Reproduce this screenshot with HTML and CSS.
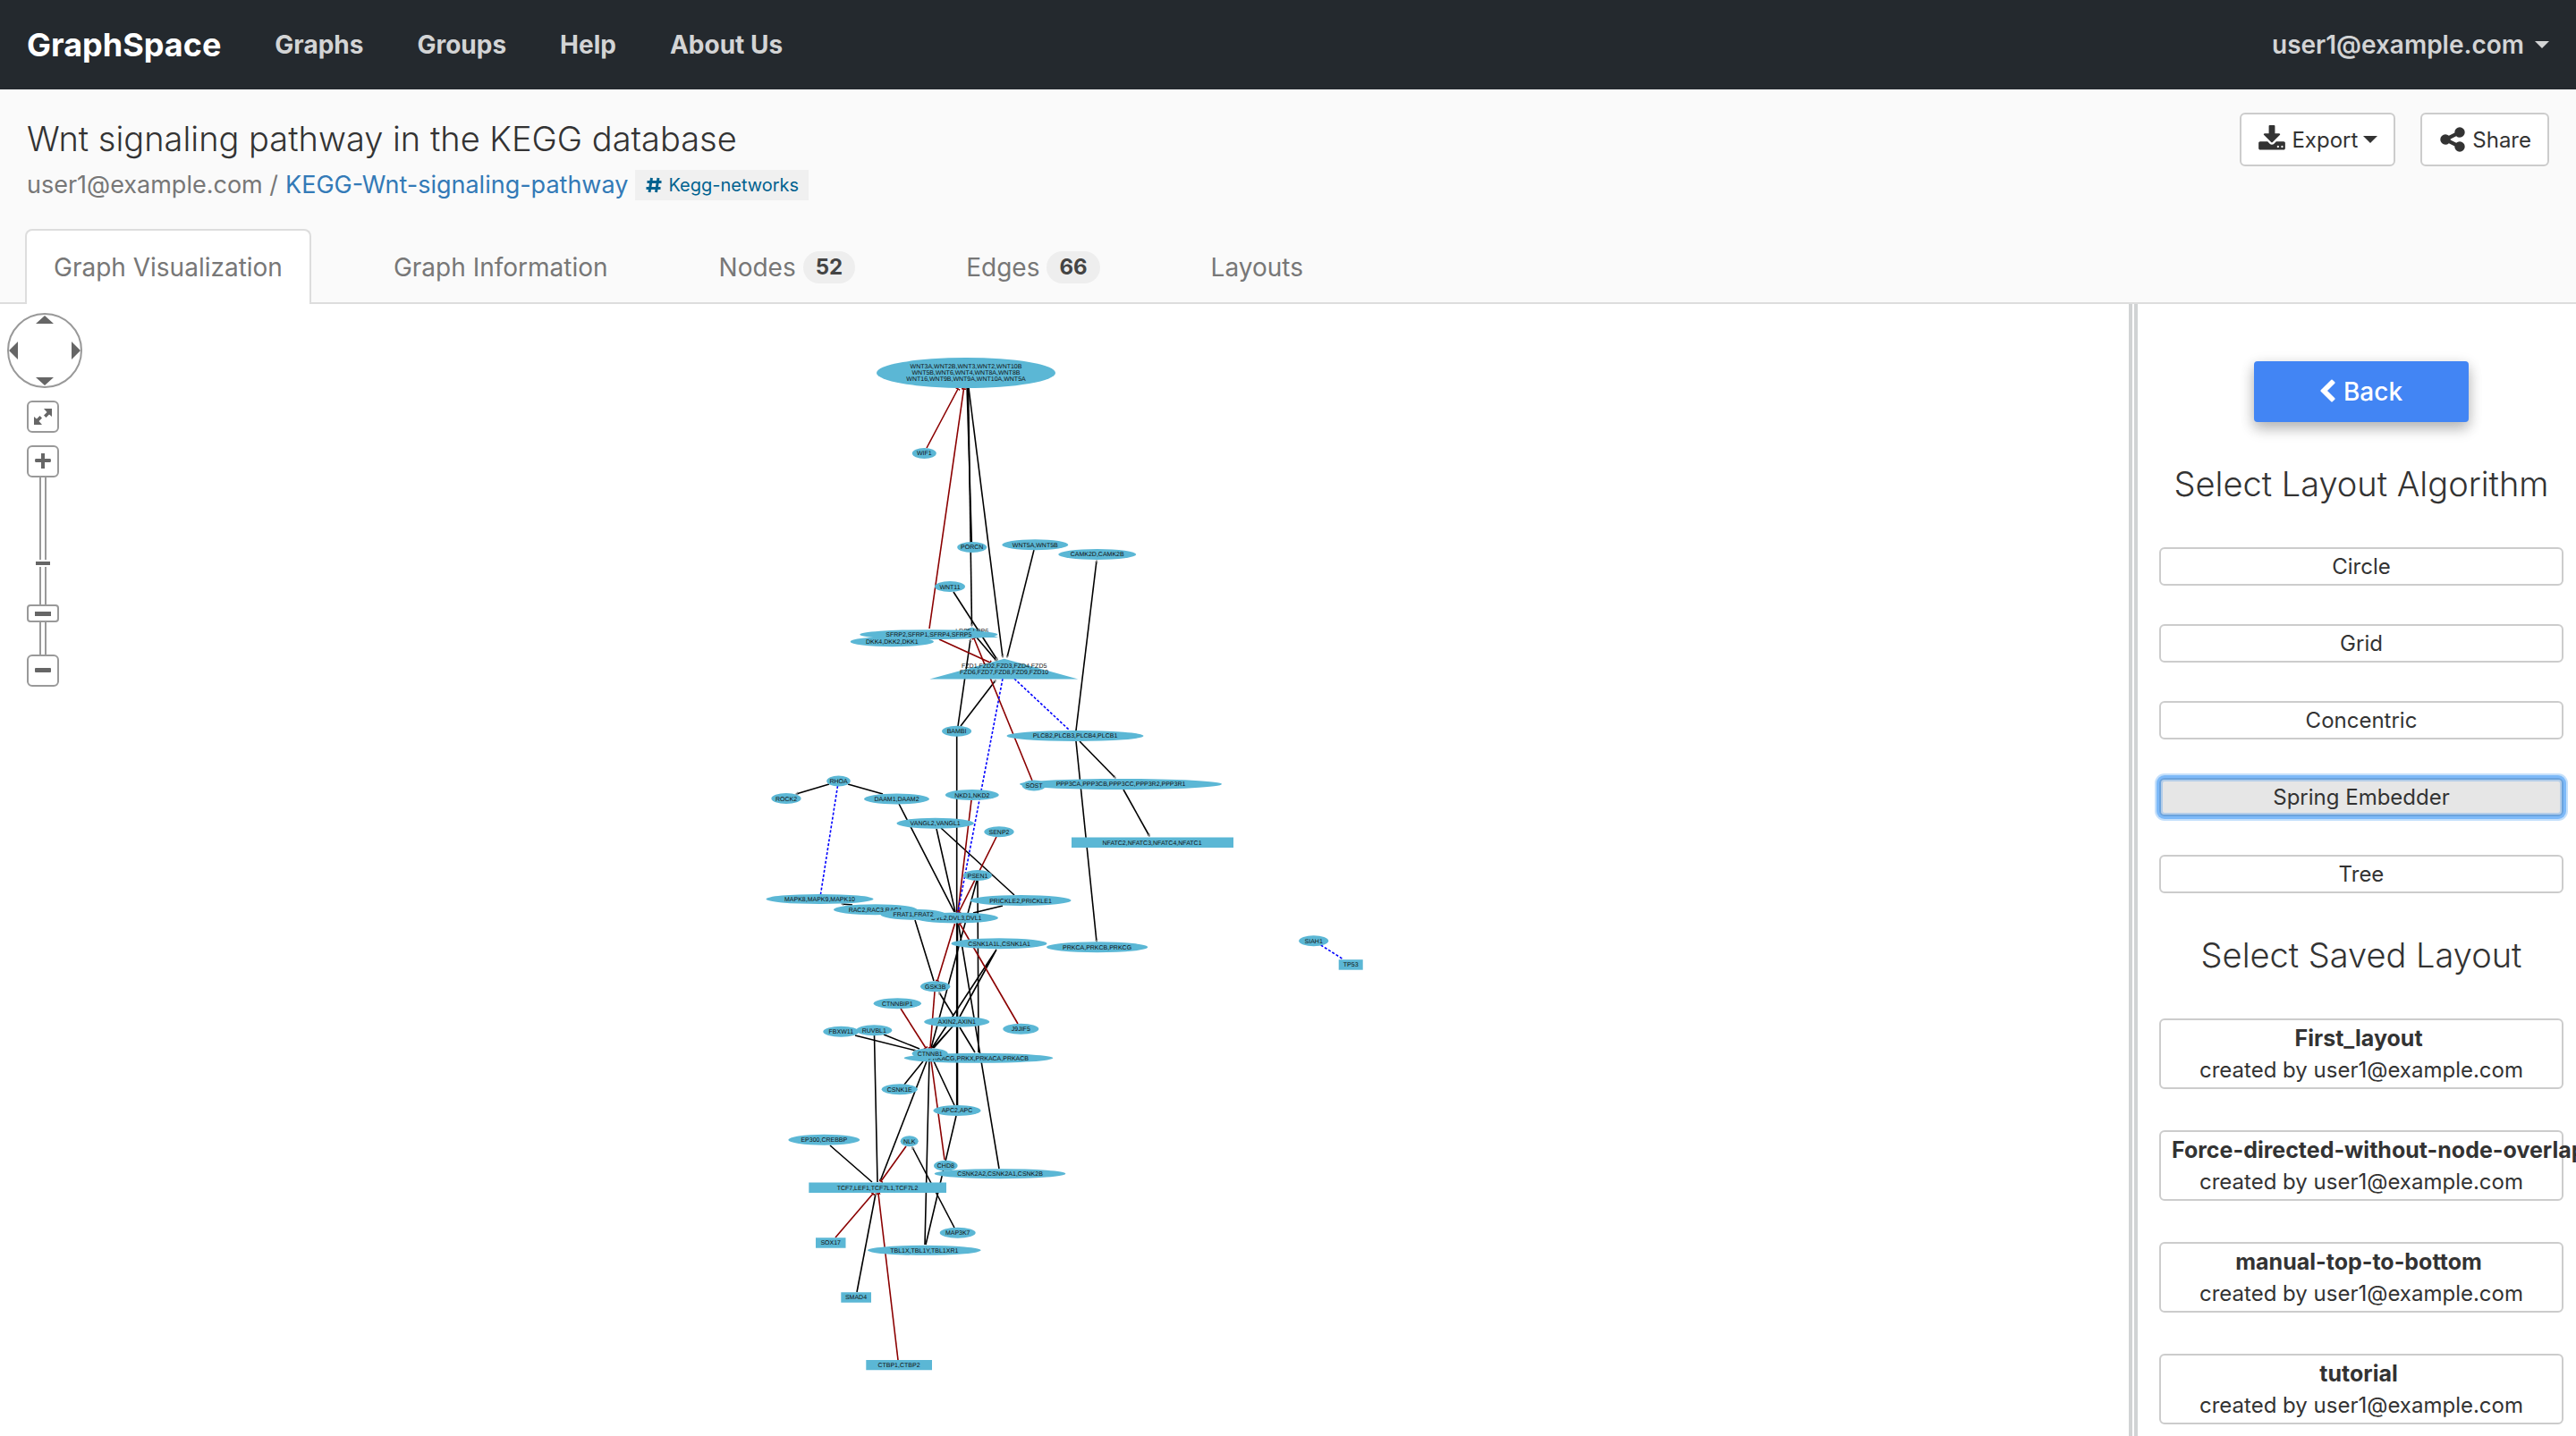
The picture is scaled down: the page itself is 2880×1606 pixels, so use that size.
FILE: index.html
```html
<!DOCTYPE html>
<html lang="en">
<head>
<meta charset="utf-8">
<title>GraphSpace</title>
<link rel="stylesheet" href="styles.css">
</head>
<body>
<nav class="navbar">
  <a class="brand" href="#">GraphSpace</a>
  <a class="nav-link" href="#">Graphs</a>
  <a class="nav-link" href="#">Groups</a>
  <a class="nav-link" href="#">Help</a>
  <a class="nav-link" href="#">About Us</a>
  <button class="user-menu" type="button">user1@example.com<span class="caret"></span></button>
</nav>

<header class="page-head">
  <div class="head-row">
    <div class="head-text">
      <h1 class="title">Wnt signaling pathway in the KEGG database</h1>
      <p class="crumbs">
        <span>user1@example.com /</span>
        <a class="graph-link" href="#">KEGG-Wnt-signaling-pathway</a>
        <a class="tag" href="#"><svg class="hash" viewBox="0 0 20 20"><path d="M7.5 2 5 18M15 2l-2.500 16M2.500 6.500h16M1.500 13.500h16"/></svg>Kegg-networks</a>
      </p>
    </div>
    <div class="actions">
      <button class="btn action" type="button">
        <svg class="icon" viewBox="0 0 1792 1792"><path d="M1344 1344q0-26-19-45t-45-19-45 19-19 45 19 45 45 19 45-19 19-45zm256 0q0-26-19-45t-45-19-45 19-19 45 19 45 45 19 45-19 19-45zm128-224v320q0 40-28 68t-68 28h-1472q-40 0-68-28t-28-68v-320q0-40 28-68t68-28h465l135 136q58 56 136 56t136-56l136-136h464q40 0 68 28t28 68zm-325-569q17 41-14 70l-448 448q-18 19-45 19t-45-19l-448-448q-31-29-14-70 17-39 59-39h256v-448q0-26 19-45t45-19h256q26 0 45 19t19 45v448h256q42 0 59 39z"/></svg>
        Export<span class="caret"></span>
      </button>
      <button class="btn action" type="button">
        <svg class="icon" viewBox="0 0 1792 1792"><path d="M1344 1024q133 0 226.500 93.500t93.500 226.500-93.500 226.500-226.500 93.500-226.500-93.500-93.500-226.500q0-12 2-34l-360-180q-92 86-218 86-133 0-226.500-93.500t-93.500-226.500 93.500-226.500 226.500-93.500q126 0 218 86l360-180q-2-22-2-34 0-133 93.500-226.500t226.500-93.500 226.500 93.500 93.500 226.500-93.500 226.500-226.500 93.500q-126 0-218-86l-360 180q2 22 2 34t-2 34l360 180q92-86 218-86z"/></svg>
        Share
      </button>
    </div>
  </div>
  <div class="tabs">
    <a class="tab active" href="#">Graph Visualization</a>
    <a class="tab" href="#">Graph Information</a>
    <a class="tab" href="#">Nodes<span class="badge">52</span></a>
    <a class="tab" href="#">Edges<span class="badge">66</span></a>
    <a class="tab" href="#">Layouts</a>
  </div>
</header>

<main class="workspace">
  <section class="canvas">
    <svg class="graph" viewBox="0 340 2380 1266" preserveAspectRatio="xMidYMin meet">
      <defs>
        <marker id="arrow" viewBox="0 0 6 6" refX="4" refY="3" markerWidth="4" markerHeight="4" markerUnits="userSpaceOnUse" orient="auto"><path d="M0 0 6 3 0 6 1.500 3z" fill="#888"/></marker>
        <marker id="tee" viewBox="0 0 2 6" refX="1" refY="3" markerWidth="2" markerHeight="5" markerUnits="userSpaceOnUse" orient="auto"><path d="M0 0h2v6H0z" fill="#8b0000"/></marker>
      </defs>
      <g class="edge">
        <path d="M1081 430 1086.500 612"/>
        <path d="M1069.700 823V1238M1070.500 1030V1238"/>
        <path d="M948 877 987 888M1005 899 1067 1020M1047 927 1068 1020M1052 926 1134 1001M1121 1013 1088 1021"/>
        <path d="M1092 985 1041 1172M1093 985 1094 1177M1071.500 1033 1117 1307M1023 1029 1044 1097"/>
        <path d="M1114 1062 1042 1172M1114 1062 1073 1137M1066 1147 1043 1172M1065 1148 1044 1172M1073 1149 1090 1177"/>
        <path d="M988 1157 1028 1173M977.500 1158 981 1322M1032 1187 1011 1213M1039 1184 1034 1392M1044 1187 1067 1236"/>
        <path d="M1069 1248 1035 1392M928 1281 975 1322"/>
      </g>
      <g class="edge arrow">
        <path d="M1082.500 430 1086.500 700"/><path d="M1083 434 1121 735"/><path d="M1156 615 1126 735"/>
        <path d="M1066 662 1115 738"/><path d="M1092 713 1114 739"/><path d="M1071 812 1085 715"/><path d="M1074 812 1113 761"/>
        <path d="M1203 817 1226 627"/><path d="M1207 829 1247 870"/><path d="M1256 883 1285 935"/><path d="M1203 829 1226 1053"/>
        <path d="M927 877 890 888"/><path d="M953 1012 941 1011"/><path d="M1066 1136 1050 1110"/><path d="M956 1158 1024 1175"/>
        <path d="M1036 1187 984 1321"/><path d="M1067 1373 1020 1283"/><path d="M958 1445 979 1335"/>
      </g>
      <g class="edge tee">
        <path d="M1036 501 1071 435"/><path d="M1039 703 1077.500 435"/><path d="M1050 715 1107 741"/><path d="M1154 873 1089 714"/>
        <path d="M1086 895 1071 1020"/><path d="M1114 936 1072 1020"/><path d="M1067.500 1033 1048 1097"/><path d="M1138 1145 1073 1033"/>
        <path d="M1045 1109 1040 1172"/><path d="M1007 1128 1035 1172"/><path d="M1056 1297 1041 1186"/><path d="M1013 1282 985 1321"/>
        <path d="M934 1384 976 1335"/><path d="M1004 1521 982 1335"/>
      </g>
      <path class="edge dashed" d="M1134 759 1196 817M1121 759 1071 1020M936.500 879 917.500 1000M1476.700 1057 1502 1073"/>

      <g class="node">
        <ellipse cx="1080" cy="417" rx="100" ry="17"/>
        <text x="1080" y="412">WNT3A,WNT2B,WNT3,WNT2,WNT10B</text>
        <text x="1080" y="419">WNT5B,WNT6,WNT4,WNT8A,WNT8B</text>
        <text x="1080" y="426">WNT16,WNT9B,WNT9A,WNT10A,WNT5A</text>
        <ellipse cx="1033.300" cy="507" rx="13.500" ry="6"/><text x="1033.300" y="509">WIF1</text>
        <ellipse cx="1086.700" cy="612" rx="16.500" ry="6"/><text x="1086.700" y="614">PORCN</text>
        <ellipse cx="1157.300" cy="609.300" rx="37" ry="6"/><text x="1157.300" y="611.500">WNT5A,WNT5B</text>
        <ellipse cx="1226.700" cy="620" rx="43.500" ry="6"/><text x="1226.700" y="622">CAMK2D,CAMK2B</text>
        <ellipse cx="1062" cy="656" rx="17" ry="6"/><text x="1062" y="658.500">WNT11</text>
        <ellipse cx="997.300" cy="717.700" rx="46.700" ry="5.500"/><text x="997.300" y="720">DKK4,DKK2,DKK1</text>
        <path d="M1086.700 701.500 1116 713H1057z"/><text x="1086.700" y="708">LRP5,LRP6</text>
        <ellipse cx="1038.300" cy="709.700" rx="77" ry="5.500"/><text x="1038.300" y="712">SFRP2,SFRP1,SFRP4,SFRP5</text>
        <path d="M1122.700 736.700 1205.300 759.500H1039.300z"/>
        <text x="1122.700" y="747">FZD1,FZD2,FZD3,FZD4,FZD5</text>
        <text x="1122.700" y="754">FZD6,FZD7,FZD8,FZD9,FZD10</text>
        <ellipse cx="1069.600" cy="817.700" rx="16.500" ry="6"/><text x="1069.600" y="820">BAMBI</text>
        <ellipse cx="1202" cy="823" rx="76.500" ry="6"/><text x="1202" y="825">PLCB2,PLCB3,PLCB4,PLCB1</text>
        <ellipse cx="1253" cy="877" rx="113" ry="6"/><text x="1253" y="879">PPP3CA,PPP3CB,PPP3CC,PPP3R2,PPP3R1</text>
        <ellipse cx="1156" cy="878.500" rx="13.300" ry="6"/><text x="1156" y="881">SOST</text>
        <path d="M1198 936.500h181v11.500h-181z"/><text x="1288" y="945">NFATC2,NFATC3,NFATC4,NFATC1</text>
        <ellipse cx="1086.800" cy="889" rx="30" ry="6"/><text x="1086.800" y="891.500">NKD1,NKD2</text>
        <ellipse cx="937.500" cy="873.500" rx="13.300" ry="6"/><text x="937.500" y="876">RHOA</text>
        <ellipse cx="879" cy="893" rx="16.600" ry="6"/><text x="879" y="895.500">ROCK2</text>
        <ellipse cx="1002.500" cy="893.500" rx="36.500" ry="6"/><text x="1002.500" y="896">DAAM1,DAAM2</text>
        <ellipse cx="1045.700" cy="920.700" rx="43.300" ry="6"/><text x="1045.700" y="923">VANGL2,VANGL1</text>
        <ellipse cx="1117" cy="930.300" rx="16.600" ry="6"/><text x="1117" y="932.700">SENP2</text>
        <ellipse cx="1093" cy="979" rx="16" ry="6"/><text x="1093" y="981.500">PSEN1</text>
        <ellipse cx="1141" cy="1007" rx="56.500" ry="6"/><text x="1141" y="1009.500">PRICKLE2,PRICKLE1</text>
        <ellipse cx="916.500" cy="1005.500" rx="60" ry="5.500"/><text x="916.500" y="1008">MAPK8,MAPK9,MAPK10</text>
        <ellipse cx="978.600" cy="1017.300" rx="46.700" ry="6"/><text x="978.600" y="1019.500">RAC2,RAC3,RAC1</text>
        <ellipse cx="1069.300" cy="1026.500" rx="46.700" ry="6"/><text x="1069.300" y="1029">DVL2,DVL3,DVL1</text>
        <ellipse cx="1021" cy="1022.700" rx="36.600" ry="6"/><text x="1021" y="1025">FRAT1,FRAT2</text>
        <ellipse cx="1117" cy="1055.300" rx="53.500" ry="6"/><text x="1117" y="1057.700">CSNK1A1L,CSNK1A1</text>
        <ellipse cx="1226.600" cy="1059.300" rx="56.600" ry="6"/><text x="1226.600" y="1061.700">PRKCA,PRKCB,PRKCG</text>
        <ellipse cx="1468.700" cy="1052.300" rx="16.500" ry="6"/><text x="1468.700" y="1054.500">SIAH1</text>
        <path d="M1496.700 1073.200h27v11.500h-27z"/><text x="1510.200" y="1081">TP53</text>
        <ellipse cx="1045.700" cy="1103.300" rx="16.600" ry="6"/><text x="1045.700" y="1105.500">GSK3B</text>
        <ellipse cx="1003.300" cy="1122.300" rx="26.600" ry="6"/><text x="1003.300" y="1124.500">CTNNBIP1</text>
        <ellipse cx="1069.700" cy="1142.700" rx="36.600" ry="6"/><text x="1069.700" y="1145">AXIN2,AXIN1</text>
        <ellipse cx="1141.300" cy="1150.700" rx="20" ry="6"/><text x="1141.300" y="1153">J9JIF5</text>
        <ellipse cx="940.300" cy="1153.700" rx="20" ry="6"/><text x="940.300" y="1156">FBXW11</text>
        <ellipse cx="977.300" cy="1152.300" rx="20" ry="6"/><text x="977.300" y="1154.700">RUVBL1</text>
        <ellipse cx="1094" cy="1183.300" rx="83.300" ry="5.500"/><text x="1094" y="1185.700">PRKACG,PRKX,PRKACA,PRKACB</text>
        <ellipse cx="1039.700" cy="1178.300" rx="20" ry="6"/><text x="1039.700" y="1180.700">CTNNB1</text>
        <ellipse cx="1005.700" cy="1218.300" rx="20" ry="6"/><text x="1005.700" y="1220.700">CSNK1E</text>
        <ellipse cx="1070" cy="1242" rx="26.600" ry="6"/><text x="1070" y="1244">APC2,APC</text>
        <ellipse cx="921.300" cy="1274.700" rx="40" ry="6"/><text x="921.300" y="1277">EP300,CREBBP</text>
        <ellipse cx="1016.700" cy="1276.300" rx="10" ry="6"/><text x="1016.700" y="1278.700">NLK</text>
        <ellipse cx="1118" cy="1312.700" rx="73.300" ry="5.500"/><text x="1118" y="1315">CSNK2A2,CSNK2A1,CSNK2B</text>
        <ellipse cx="1057.300" cy="1303.700" rx="13.300" ry="6"/><text x="1057.300" y="1306">CHD8</text>
        <path d="M904.300 1322.500h153.700v11.500h-153.700z"/><text x="981" y="1330.700">TCF7,LEF1,TCF7L1,TCF7L2</text>
        <ellipse cx="1070.700" cy="1378.700" rx="20" ry="6"/><text x="1070.700" y="1381">MAP3K7</text>
        <ellipse cx="1033.300" cy="1398.300" rx="63.300" ry="5.500"/><text x="1033.300" y="1400.700">TBL1X,TBL1Y,TBL1XR1</text>
        <path d="M912 1384.300h33.500v11.500h-33.500z"/><text x="928.700" y="1392.300">SOX17</text>
        <path d="M940.300 1445.300h33.700v11.500h-33.700z"/><text x="957" y="1453">SMAD4</text>
        <path d="M968.300 1521h73.700v11.300h-73.700z"/><text x="1005" y="1528.700">CTBP1,CTBP2</text>
      </g>
    </svg>

    <div class="panzoom">
      <svg class="pan" viewBox="0 0 84 84">
        <circle cx="42" cy="42" r="41"/>
        <path d="M42 3 52 12H32zM42 81 52 72H32zM2 42 12 32V52zM82 42 72 32V52z"/>
      </svg>
      <button class="pz-button fit" type="button" aria-label="Fit">
        <svg viewBox="0 0 32 32"><path d="M17 7h9v9l-3-2.500-3.500 3.500-2.500-2.500 3.500-3.500zM15 25H6v-9l3 2.500 3.500-3.500 2.500 2.500-3.500 3.500z"/></svg>
      </button>
      <button class="pz-button" type="button" aria-label="Zoom in">
        <svg viewBox="0 0 32 32"><path d="M8 13h6V7h4v6h6q1 0 1 2t-1 2h-6v7h-4v-7H8q-1 0-1-2t1-2z"/></svg>
      </button>
      <div class="zoom-track">
        <input class="zoom-range" type="range" min="0" max="100" value="20" aria-label="Zoom">
        <span class="zoom-tick"></span>
      </div>
      <button class="pz-button" type="button" aria-label="Zoom out">
        <svg viewBox="0 0 32 32"><rect x="7" y="13" width="18" height="5" rx="1"/></svg>
      </button>
    </div>
  </section>

  <div class="splitter"></div>

  <aside class="sidebar">
    <button class="back" type="button">
      <svg class="chevron" viewBox="410 0 1036 1792"><path d="M1427 301l-531 531 531 531q19 19 19 45t-19 45l-166 166q-19 19-45 19t-45-19l-742-742q-19-19-19-45t19-45l742-742q19-19 45-19t45 19l166 166q19 19 19 45t-19 45z"/></svg>
      Back
    </button>
    <h2 class="side-title">Select Layout Algorithm</h2>
    <div class="algorithms">
      <button class="btn" type="button">Circle</button>
      <button class="btn" type="button">Grid</button>
      <button class="btn" type="button">Concentric</button>
      <button class="btn selected" type="button">Spring Embedder</button>
      <button class="btn" type="button">Tree</button>
    </div>
    <h2 class="side-title">Select Saved Layout</h2>
    <div class="saved">
      <button class="btn layout" type="button"><strong>First_layout&nbsp;</strong><span>created by user1@example.com</span></button>
      <button class="btn layout" type="button"><strong>Force-directed-without-node-overlap&nbsp;</strong><span>created by user1@example.com</span></button>
      <button class="btn layout" type="button"><strong>manual-top-to-bottom&nbsp;</strong><span>created by user1@example.com</span></button>
      <button class="btn layout" type="button"><strong>tutorial&nbsp;</strong><span>created by user1@example.com</span></button>
    </div>
  </aside>
</main>
</body>
</html>
```
FILE: styles.css
```css
* { box-sizing: border-box; }
body {
  margin: 0;
  min-height: 100vh;
  display: flex;
  flex-direction: column;
  overflow: hidden;
  background: #fff;
  color: #333;
  font-family: Inter, "Liberation Sans", sans-serif;
  font-size: 24px;
}
a { color: inherit; text-decoration: none; }
button { font: inherit; color: inherit; }
h1, h2, p { margin: 0; font-weight: 300; }

/* Top navigation */
.navbar {
  display: flex;
  align-items: center;
  gap: 60px;
  height: 100px;
  padding: 0 30px;
  background: #24292e;
  color: #d3d4d5;
  font-size: 28px;
  font-weight: 700;
}
.brand { color: #fff; font-size: 36px; }
.user-menu {
  display: flex;
  align-items: center;
  gap: 12px;
  margin-left: auto;
  padding: 0;
  border: 0;
  background: none;
  font-weight: 600;
}
.caret {
  border: 8px solid transparent;
  border-top-color: currentColor;
  border-bottom: 0;
}

/* Graph heading and tabs */
.page-head { background: #fafafa; border-bottom: 2px solid #ddd; }
.head-row {
  display: flex;
  justify-content: space-between;
  padding: 26px 30px 0;
}
.title { font-size: 38px; line-height: 58px; }
.crumbs {
  display: flex;
  align-items: center;
  gap: 8px;
  line-height: 46px;
  font-size: 27px;
  font-weight: 400;
  color: #777;
}
.graph-link { color: #337ab7; }
.tag {
  display: flex;
  align-items: center;
  gap: 6px;
  padding: 0 11px;
  line-height: 34px;
  background: #f0f0f0;
  color: #00628f;
  font-size: 20px;
}
.hash { width: 20px; height: 20px; fill: none; stroke: currentColor; stroke-width: 3; }
.actions { display: flex; align-items: flex-start; gap: 28px; }
.btn {
  border: 2px solid #ccc;
  border-radius: 6px;
  background: #fff;
  font-weight: 400;
}
.action {
  display: flex;
  align-items: center;
  gap: 6px;
  height: 60px;
  padding: 0 18px;
}
.icon { width: 32px; height: 32px; fill: currentColor; }
.tabs { display: flex; gap: 60px; margin-bottom: -2px; padding: 26px 28px 0; }
.tab {
  display: flex;
  align-items: center;
  gap: 8px;
  height: 84px;
  padding: 0 30px;
  border: 2px solid transparent;
  border-bottom: 0;
  border-radius: 8px 8px 0 0;
  color: #777;
  font-size: 28px;
}
.tab.active { border-color: #ddd; background: #fff; }
.badge {
  padding: 0 14px;
  border-radius: 18px;
  background: #eee;
  color: #444;
  font-size: 24px;
  font-weight: 700;
  line-height: 36px;
}

/* Workspace */
.workspace { display: flex; flex: 1; }
.canvas { position: relative; flex: 1; }
.graph { position: absolute; inset: 0; width: 100%; height: 100%; }
.edge { fill: none; stroke: #000; stroke-width: 1.6; }
.arrow path { marker-end: url(#arrow); }
.tee { stroke: #8b0000; }
.tee path { marker-end: url(#tee); }
.dashed { stroke: #00f; stroke-dasharray: 3 2; }
.node { fill: #5bb7d5; }
.node text {
  fill: #111;
  font-family: "Liberation Sans", sans-serif;
  font-size: 7px;
  text-anchor: middle;
  text-rendering: geometricPrecision;
}

/* Pan and zoom controls over the canvas */
.panzoom {
  position: absolute;
  left: 8px;
  top: 10px;
  width: 84px;
}
.panzoom svg { display: block; fill: #666; }
.pan { width: 84px; height: 84px; }
.pan circle { fill: #fff; stroke: #999; stroke-width: 2; }
.pz-button {
  display: block;
  width: 36px;
  height: 36px;
  margin-left: 22px;
  padding: 0;
  border: 2px solid #999;
  border-radius: 6px;
  background: #fff;
}
.fit { margin-top: 14px; margin-bottom: 14px; }
.zoom-track { position: relative; width: 36px; height: 198px; margin-left: 22px; }
.zoom-range {
  appearance: none;
  writing-mode: vertical-lr;
  direction: rtl;
  display: block;
  width: 36px;
  height: 100%;
  margin: 0;
  background: linear-gradient(90deg, #999 2px, #fff 2px 6px, #999 6px) center / 8px 100% no-repeat;
}
.zoom-range::-webkit-slider-thumb {
  appearance: none;
  width: 36px;
  height: 20px;
  border: 2px solid #999;
  border-radius: 4px;
  background: linear-gradient(#666, #666) center / 18px 5px no-repeat #fff;
}
.zoom-tick {
  position: absolute;
  left: 10px;
  top: 92px;
  width: 16px;
  height: 8px;
  border: solid #fff;
  border-width: 2px 0;
  background: #666;
}

/* Layout sidebar */
.splitter {
  width: 10px;
  border: solid #d1d3d4;
  border-width: 0 4px;
}
.sidebar {
  width: 490px;
  padding: 64px 14px 12px 24px;
}
.back {
  display: flex;
  align-items: center;
  justify-content: center;
  gap: 9px;
  width: 240px;
  height: 68px;
  margin: 0 auto;
  border: 0;
  border-radius: 4px;
  background: #4285f4;
  box-shadow: 0 8px 16px rgba(0, 0, 0, .2), 0 4px 16px rgba(0, 0, 0, .15);
  color: #fff;
  font-size: 28px;
  font-weight: 500;
}
.chevron { width: 17px; height: 28px; fill: currentColor; }
.side-title {
  margin: 42px 0 44px;
  font-size: 38px;
  line-height: 54px;
  text-align: center;
  white-space: nowrap;
}
.algorithms { display: grid; gap: 43px; }
.algorithms .btn { height: 43px; padding: 0; }
.algorithms .selected {
  background: #e6e6e6;
  border-color: #6ba3dd;
  box-shadow: 0 0 0 3px #7db9f8, 0 0 0 5px #c5e0fb, inset 0 0 0 2px #b4cde8;
}
.saved { display: grid; grid-template-columns: minmax(0, 1fr); gap: 46px; }
.layout {
  display: grid;
  grid-template-columns: minmax(0, 1fr);
  align-content: center;
  height: 79px;
  padding: 0 12px;
  line-height: 36px;
  white-space: nowrap;
}
.layout strong { font-size: 25px; font-weight: 700; }
```
